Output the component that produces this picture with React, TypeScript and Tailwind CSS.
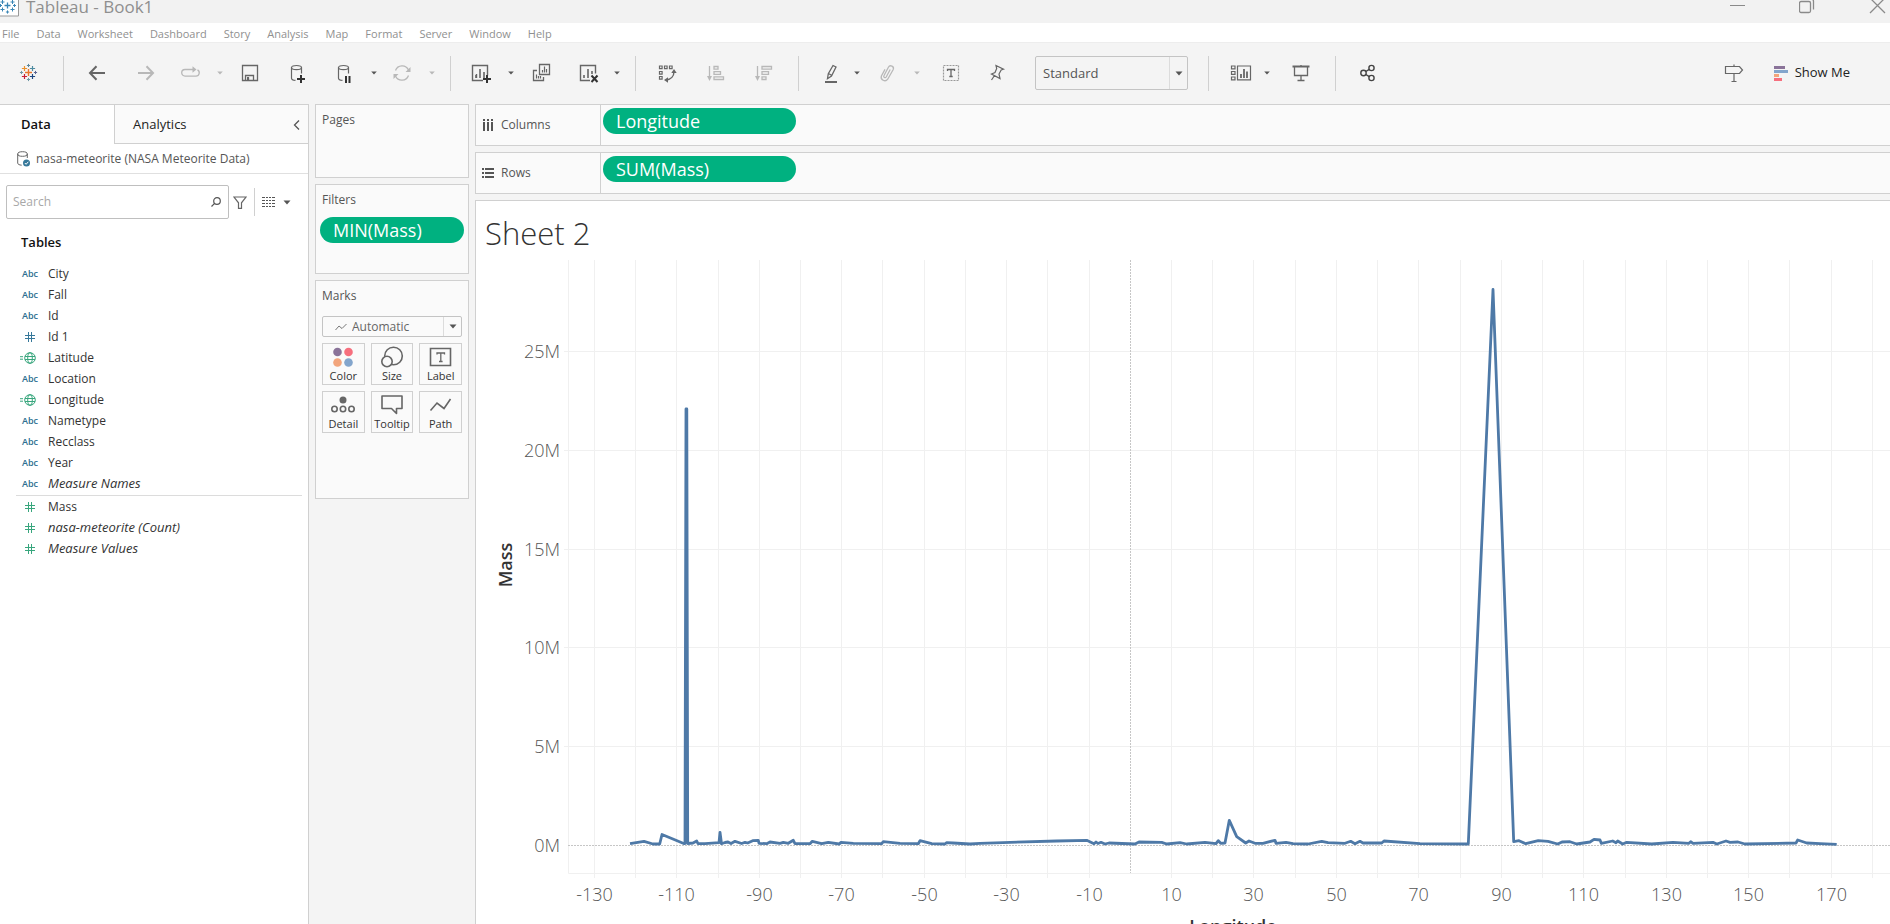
import type { ReactNode } from "react";

const UI = "font-['Open_Sans','Liberation_Sans',sans-serif]";

function Icon({ children, className = "text-[#666]" }: { children: ReactNode; className?: string }) {
  return (
    <svg viewBox="0 0 24 24" className={`block size-6 shrink-0 ${className}`} fill="none" stroke="currentColor" strokeWidth="1.2" aria-hidden="true">
      {children}
    </svg>
  );
}

function Tool({ label, className, dim, children }: { label: string; className: string; dim?: boolean; children: ReactNode }) {
  return (
    <button type="button" aria-label={label} className={`shrink-0 ${className}`}>
      <Icon className={dim ? "text-[#b8b8b8]" : "text-[#666]"}>{children}</Icon>
    </button>
  );
}

function Caret({ dim, className = "" }: { dim?: boolean; className?: string }) {
  return (
    <button type="button" aria-label="Open menu" className={`w-3 shrink-0 ${className}`}>
      <svg viewBox="0 0 12 6" className={`block h-1.5 w-3 ${dim ? "text-[#b8b8b8]" : "text-[#555]"}`} aria-hidden="true">
        <path d="M3.2 1.5h5.6L6 4.6z" fill="currentColor" />
      </svg>
    </button>
  );
}

const Sep = ({ className }: { className: string }) => <span className={`h-[35px] w-px shrink-0 bg-[#d0d0d0] ${className}`} />;

function Plus({ x, y, r, color, w = 1 }: { x: number; y: number; r: number; color: string; w?: number }) {
  return <path d={`M${x - r} ${y}h${2 * r}M${x} ${y - r}v${2 * r}`} stroke={color} strokeWidth={w} />;
}

const Cylinder = ({ x }: { x: number }) => (
  <g strokeWidth="1.2">
    <ellipse cx={x + 5.5} cy="6.6" rx="5" ry="2.1" />
    <path d={`M${x + 0.5} 6.6v10.6c0 1.4 1.6 2 4 2.2M${x + 10.5} 6.6v6`} />
  </g>
);

const TitleBar = () => (
  <header className="flex h-[23px] shrink-0 items-start justify-between bg-[#f2f2f2] text-[#8f8f8f]">
    <div className="flex items-start">
      <svg viewBox="0 0 19 17" className="block h-[17px] w-[19px]" aria-hidden="true">
        <path d="M0 0h18v16H0z" fill="#fff" />
        <path d="M0 16h18.500V0" fill="none" stroke="#999" />
        <g fill="none">
          <Plus x={7.5} y={5.5} r={3} color="#3b86b5" w={1.3} />
          <Plus x={2.5} y={2} r={2} color="#3b86b5" />
          <Plus x={12.5} y={2} r={2} color="#3b86b5" />
          <Plus x={2.5} y={9.5} r={2} color="#3b86b5" />
          <Plus x={12.5} y={9.5} r={2} color="#3b86b5" />
          <Plus x={7.5} y={12} r={1.6} color="#3b86b5" />
          <Plus x={14.5} y={5.5} r={1.5} color="#3b86b5" />
          <Plus x={0.5} y={5.5} r={1.5} color="#3b86b5" />
        </g>
      </svg>
      <h1 className="pl-[7px] text-[17px] leading-[14px]">Tableau - Book1</h1>
    </div>
    <div className="flex gap-[53px] pr-0.5">
      <button type="button" aria-label="Minimize">
        <svg viewBox="0 0 16 14" className="block h-3.5 w-4" stroke="#8a8a8a" aria-hidden="true"><path d="M0 5.500h15" /></svg>
      </button>
      <button type="button" aria-label="Restore">
        <svg viewBox="0 0 16 14" className="block h-3.5 w-4" fill="none" stroke="#8a8a8a" aria-hidden="true">
          <rect x="0.5" y="1.5" width="11" height="11" rx="1.500" strokeWidth="1.3" />
          <path d="M10-1h2c1.500 0 2.500 1 2.500 2.500v8" strokeWidth="1.3" />
        </svg>
      </button>
      <button type="button" aria-label="Close">
        <svg viewBox="0 0 20 14" className="block h-3.5 w-5" stroke="#8a8a8a" strokeWidth="1.3" aria-hidden="true"><path d="M2-2l15 15M17-2L2 13" /></svg>
      </button>
    </div>
  </header>
);

const MENUS = ["File", "Data", "Worksheet", "Dashboard", "Story", "Analysis", "Map", "Format", "Server", "Window", "Help"];

const MenuBar = () => (
  <nav className="flex h-5 shrink-0 items-center gap-[17px] border-b border-[#ededed] bg-white pt-0.5 pl-0.5 text-[11px] leading-[18px] text-[#909090]">
    {MENUS.map((m) => (
      <button type="button" key={m}>{m}</button>
    ))}
  </nav>
);

const Toolbar = () => (
  <div className="flex h-[60px] shrink-0 items-center bg-[#f4f4f4] pl-4">
    <Tool label="Start page" className="">
      <g transform="translate(0.5 0)">
        <Plus x={12} y={11.500} r={3.500} color="#e8762c" w={1.400} />
        <Plus x={8} y={7.500} r={2.600} color="#eb912c" w={1.200} />
        <Plus x={16} y={7.500} r={2.600} color="#4e8ba0" w={1.200} />
        <Plus x={8} y={15.500} r={2.600} color="#c72035" w={1.200} />
        <Plus x={16} y={15.500} r={2.600} color="#1f457e" w={1.200} />
        <Plus x={12} y={4.500} r={1.600} color="#5b879b" />
        <Plus x={12} y={18.500} r={1.600} color="#7099a6" />
        <Plus x={5} y={11.500} r={1.600} color="#7099a6" />
        <Plus x={19} y={11.500} r={1.600} color="#5b6591" />
      </g>
    </Tool>
    <Sep className="ml-[23px]" />
    <Tool label="Undo" className="ml-5.5"><path d="M19 12H4M10.500 5.300L4 12l6.500 6.700" strokeWidth="2" /></Tool>
    <Tool label="Redo" className="ml-6" dim><path d="M4 12h15M12.500 5.300L19 12l-6.500 6.700" strokeWidth="2" /></Tool>
    <Tool label="Replay" className="ml-5" dim>
      <path d="M8 8.500H7a3.300 3.300 0 0 0 0 6.600h11a3.300 3.300 0 0 0 1.500-6.200M8 8.500h8" strokeWidth="1.300" />
      <path d="M14.500 5.200L18.500 8.500l-4 3.300z" fill="currentColor" stroke="none" />
    </Tool>
    <Caret dim className="ml-3" />
    <Tool label="Save" className="ml-3">
      <path d="M4.500 4.500h15v15h-15zM7.500 19.500v-5h8v5M10.500 19v-2.500" strokeWidth="1.300" />
      <path d="M9 16h2v3H9z" fill="currentColor" stroke="none" />
    </Tool>
    <Tool label="New data source" className="ml-6">
      <Cylinder x={5} />
      <path d="M15 14v8M11 18h8" stroke="#333" strokeWidth="2" />
    </Tool>
    <Tool label="Pause updates" className="ml-5.5">
      <Cylinder x={6} />
      <path d="M14 15v7M17.500 15v7" stroke="#333" strokeWidth="2" />
    </Tool>
    <Caret className="ml-3" />
    <Tool label="Run update" className="ml-2.5" dim>
      <path d="M5.500 9.500a7 7 0 0 1 13-.5M18.500 14.500a7 7 0 0 1-13 .5" strokeWidth="1.300" />
      <path d="M20.500 6v5h-5zM3.500 18v-5h5z" fill="currentColor" stroke="none" />
    </Tool>
    <Caret dim className="ml-3" />
    <Sep className="ml-3" />
    <Tool label="New worksheet" className="ml-4.5">
      <path d="M14 19.500H3.500v-15h15v10M7.500 17v-4" strokeWidth="1.400" />
      <path d="M7 17v-3M11 17V8M15 17v-6" strokeWidth="1.600" />
      <path d="M18 14v8M14 18h8" stroke="#333" strokeWidth="2" />
    </Tool>
    <Caret className="ml-3" />
    <Tool label="Duplicate" className="ml-3">
      <path d="M10.500 3.500h10v10h-10zM8 9.500H4.500v10h10V16" strokeWidth="1.300" />
      <path d="M13.500 11.500V9M15.500 11.500v-6M17.500 11.500V8M7.500 17.500v-4M9.500 17.500V15M11.500 17.500V15" />
    </Tool>
    <Tool label="Clear sheet" className="ml-6">
      <path d="M13 19.500H3.500v-15h15v8" strokeWidth="1.400" />
      <path d="M7 17v-3M11 17V8M15 13v-3" strokeWidth="1.600" />
      <path d="M14.500 14.500l6 6.500M20.500 14.500l-6 6.500" stroke="#333" strokeWidth="2" />
    </Tool>
    <Caret className="ml-2.5" />
    <Sep className="ml-3" />
    <Tool label="Swap rows and columns" className="ml-5">
      <path d="M3.500 5h2.600v2.600H3.500zM8.500 5h2.600v2.600H8.500zM13.500 5h2.600v2.600h-2.600zM3.500 10.500h2.600v2.600H3.500zM3.500 15.500h2.600v2.600H3.500z" />
      <path d="M18 10.500c0 4.500-3 8-8 8.500" strokeWidth="1.400" />
      <path d="M18 8l2.700 4h-5.400zM8 19l4-2.700v5.400z" fill="currentColor" stroke="none" />
    </Tool>
    <Tool label="Sort ascending" className="ml-6" dim>
      <path d="M5.500 5v12M10 5.500h4v2.600h-4zM10 10.700h6.500v2.600H10zM10 15.900h9.500v2.600H10z" strokeWidth="1.300" />
      <path d="M3 15h5l-2.500 5z" fill="currentColor" stroke="none" />
    </Tool>
    <Tool label="Sort descending" className="ml-6" dim>
      <path d="M5.500 5v12M10 5.500h9.500v2.600H10zM10 10.700h6.500v2.600H10zM10 15.900h4v2.600h-4z" strokeWidth="1.300" />
      <path d="M3 15h5l-2.500 5z" fill="currentColor" stroke="none" />
    </Tool>
    <Sep className="ml-5.5" />
    <Tool label="Highlight" className="ml-5">
      <path d="M14 4.500l3 1.500-4.500 9-4 2.700.8-5zM9.500 12.500l3 1.800" strokeWidth="1.300" />
      <path d="M6 21h12" strokeWidth="2" />
    </Tool>
    <Caret className="ml-2" />
    <Tool label="Group members" className="ml-3" dim>
      <path d="M14.500 8.500l-4 7.500a1.300 1.300 0 0 1-2.300-1.300l4.500-8.400a2.600 2.600 0 0 1 4.700 2.400L12 18.200a3.600 3.600 0 0 1-6.300-3.300l3.600-6.500" strokeWidth="1.300" transform="translate(.7 0)" />
    </Tool>
    <Caret dim className="ml-3" />
    <Tool label="Show mark labels" className="ml-4">
      <path d="M4.500 4.500h15v15h-15z" stroke="#999" strokeDasharray="2 1" />
      <path d="M8.500 10V8.500h7V10M12 8.500v7M10.300 15.500h3.400" strokeWidth="1.300" />
    </Tool>
    <Tool label="Fix axes" className="ml-5.5">
      <path d="M11 4.500l7.500 3.700-2.300.8-2.200 4 1 4.500-8.500-4.500 3.500-1.500 1.700-4zM9.500 14.500L6.500 19" strokeWidth="1.200" />
    </Tool>
    <div className="ml-6.5 flex h-[34px] w-[153px] shrink-0 items-center rounded-xs border border-[#c4c4c4]">
      <div className="relative flex h-full w-full items-center">
        <select aria-label="Fit" className="h-full w-full appearance-none bg-transparent pt-0.5 pl-[7px] text-[13px] text-[#555]">
          <option>Standard</option>
          <option>Fit Width</option>
          <option>Entire View</option>
        </select>
        <span className="pointer-events-none absolute right-0 flex h-full w-[18px] items-center justify-center border-l border-[#dcdcdc]">
          <svg viewBox="0 0 8 5" className="h-[5px] w-2" aria-hidden="true"><path d="M.5.500h7L4 4.500z" fill="#555" /></svg>
        </span>
      </div>
    </div>
    <Sep className="ml-5" />
    <Tool label="Show or hide cards" className="ml-5">
      <path d="M2.500 5h3.500v2.800H2.500zM2.500 10.500h3.500v2.800H2.500zM2.500 16h3.500v2.800H2.500zM8.500 5h13v13.800h-13z" strokeWidth="1.200" />
      <path d="M12 17v-4M15 17V8M18 17v-6.500" strokeWidth="1.800" />
    </Tool>
    <Caret className="ml-2" />
    <Tool label="Presentation mode" className="ml-4">
      <path d="M3.500 5.500h17" strokeWidth="2" />
      <path d="M5.500 6v8.500h13V6M12 14.500v4.500M8.500 19.500h7M12 4v1" strokeWidth="1.300" />
    </Tool>
    <Sep className="ml-5.5" />
    <Tool label="Share" className="ml-5">
      <g strokeWidth="1.400" stroke="#444">
        <circle cx="7.500" cy="12" r="2.700" /><circle cx="15.500" cy="7" r="2.600" /><circle cx="15.500" cy="17" r="2.600" />
        <path d="M9.800 10.500l3.500-2.200M9.800 13.500l3.500 2.200" />
      </g>
    </Tool>
    <div className="ml-auto flex items-center pr-10">
      <Tool label="Guide" className="">
        <path d="M3.500 5.500h14l3 3.500-3 3.500h-14zM12 3.500v2M12 12.500v7.500M9.500 20.500h5" strokeWidth="1.200" />
      </Tool>
      <button type="button" className="ml-7 flex items-center gap-[7px] text-[13px] text-[#222]">
        <svg viewBox="0 0 14 15" className="h-[15px] w-3.5" aria-hidden="true">
          <path d="M0 0h11v3H0z" fill="#8a7399" /><path d="M0 4h14v3H0z" fill="#83a5cc" />
          <path d="M0 8h5v3H0z" fill="#f2a57c" /><path d="M0 12h8v3H0z" fill="#f66f7e" />
        </svg>
        Show Me
      </button>
    </div>
  </div>
);

type Kind = "abc" | "num" | "geo";
const DIMENSIONS: [string, Kind, boolean?][] = [
  ["City", "abc"], ["Fall", "abc"], ["Id", "abc"], ["Id 1", "num"], ["Latitude", "geo"], ["Location", "abc"],
  ["Longitude", "geo"], ["Nametype", "abc"], ["Recclass", "abc"], ["Year", "abc"], ["Measure Names", "abc", true],
];
const MEASURES: [string, Kind, boolean?][] = [["Mass", "num"], ["nasa-meteorite (Count)", "num", true], ["Measure Values", "num", true]];

function FieldIcon({ kind, green }: { kind: Kind; green: boolean }) {
  if (kind === "abc") return <span className="text-[9px] font-semibold text-[#2c6e8f]">Abc</span>;
  if (kind === "num")
    return (
      <svg viewBox="0 0 10 10" className={`h-2.5 w-2.5 ${green ? "text-[#38a67d]" : "text-[#36789a]"}`} stroke="currentColor" aria-hidden="true">
        <path d="M3.500 0v10M6.500 0v10M0 3.500h10M0 6.500h10" />
      </svg>
    );
  return (
    <svg viewBox="0 0 16 12" className="mr-1 h-3 w-4 shrink-0 text-[#38a67d]" fill="none" stroke="currentColor" aria-hidden="true">
      <circle cx="10" cy="6" r="5.300" /><ellipse cx="10" cy="6" rx="2.300" ry="5.300" />
      <path d="M5 4.500h10M5 7.500h10M0 4.700h3M0 7.200h3" />
    </svg>
  );
}

const FieldList = ({ fields, green }: { fields: [string, Kind, boolean?][]; green: boolean }) => (
  <ul>
    {fields.map(([name, kind, calc]) => (
      <li key={name} className="flex h-[21px] items-center pl-[18px]">
        <span className="flex w-6 items-center justify-center">
          <FieldIcon kind={kind} green={green} />
        </span>
        <span className={`pl-1.5 text-[#333] ${calc ? "text-[13px] italic" : "text-[12px]"}`}>{name}</span>
      </li>
    ))}
  </ul>
);

const DataPane = () => (
  <aside className="flex w-[309px] shrink-0 flex-col border-t border-r border-[#d0d0d0] bg-white">
    <div className="flex h-[39px] text-[13px]">
      <button type="button" className="w-[114px] pl-[21px] text-left font-semibold text-[#111]">Data</button>
      <button type="button" className="flex flex-1 items-center justify-between border-b border-l border-[#d0d0d0] bg-[#fafafa] pt-0.5 pr-[7px] pl-[18px] text-[#222]">
        Analytics
        <svg viewBox="0 0 8 10" className="h-2.5 w-2" fill="none" stroke="#555" strokeWidth="1.300" aria-hidden="true"><path d="M6 .5L1.500 5 6 9.500" /></svg>
      </button>
    </div>
    <div className="flex h-[30px] items-center gap-1.5 border-b border-[#e0e0e0] pl-[17px] text-[12px] text-[#555]">
      <svg viewBox="0 0 13 16" className="h-4 w-[13px]" fill="none" stroke="#666" aria-hidden="true">
        <ellipse cx="5.500" cy="3" rx="4.800" ry="2.300" /><path d="M.7 3v9c0 1.300 1.500 2 4 2.200M10.300 3v4" />
        <circle cx="9.500" cy="12" r="3.500" fill="#36789a" stroke="none" /><path d="M7.800 12l1.300 1.300 2.200-2.500" stroke="#fff" />
      </svg>
      nasa-meteorite (NASA Meteorite Data)
    </div>
    <div className="flex h-14 items-center pl-1.5">
      <label className="flex h-[34px] w-[223px] items-center rounded-xs border border-[#bfbfbf] pr-[7px] pl-1.5">
        <input type="text" placeholder="Search" aria-label="Search fields" className="w-full bg-transparent text-[12px] outline-none placeholder:text-[#a8a8a8]" />
        <svg viewBox="0 0 10 10" className="h-2.5 w-2.5 shrink-0" fill="none" stroke="#555" strokeWidth="1.200" aria-hidden="true"><circle cx="6" cy="4" r="3.300" /><path d="M3.600 6.400L.5 9.500" /></svg>
      </label>
      <button type="button" aria-label="Filter fields" className="ml-1">
        <svg viewBox="0 0 14 13" className="h-[13px] w-3.5" fill="none" stroke="#666" strokeWidth="1.200" aria-hidden="true"><path d="M1 1h12L8.500 6.800v5.500h-3V6.800z" /></svg>
      </button>
      <span className="ml-[7px] h-7 w-px bg-[#d0d0d0]" />
      <button type="button" aria-label="View as" className="ml-[7px] flex items-center gap-2">
        <svg viewBox="0 0 13 10" className="h-2.5 w-[13px]" stroke="#555" aria-hidden="true"><path d="M0 .5h3M4 .5h2M7 .5h2M10 .5h3M0 3.500h3M4 3.500h2M7 3.500h2M10 3.500h3M0 6.500h3M4 6.500h2M7 6.500h2M10 6.500h3M0 9.500h3M4 9.500h2M7 9.500h2M10 9.500h3" /></svg>
        <svg viewBox="0 0 8 5" className="h-[5px] w-2" aria-hidden="true"><path d="M.5.500h7L4 4.500z" fill="#555" /></svg>
      </button>
    </div>
    <h2 className="pt-0.5 pl-[21px] text-[13px] leading-[21px] font-semibold text-[#111]">Tables</h2>
    <div className="pt-2.5 pr-1.5">
      <FieldList fields={DIMENSIONS} green={false} />
      <hr className="mt-px ml-4 border-[#dcdcdc]" />
      <FieldList fields={MEASURES} green />
    </div>
  </aside>
);

const Pill = ({ children, className = "" }: { children: ReactNode; className?: string }) => (
  <button type="button" className={`flex h-[26px] items-center rounded-full bg-[#00b180] pl-[13px] text-[18px] font-medium text-white ${className}`}>{children}</button>
);

const MARKS: [string, ReactNode][] = [
  ["Color", <g key="c" stroke="none"><circle cx="6.500" cy="6" r="4.300" fill="#8a7399" /><circle cx="17.500" cy="6" r="4.300" fill="#f66f7e" /><circle cx="6.500" cy="16.500" r="4.300" fill="#f2a57c" /><circle cx="17.500" cy="16.500" r="4.300" fill="#83a5cc" /></g>],
  ["Size", <g key="s"><circle cx="13.500" cy="10" r="8.800" /><circle cx="7" cy="15.500" r="5.200" fill="#fafafa" /></g>],
  ["Label", <g key="l"><path d="M1.500 2.500h20v17h-20z" /><path d="M8 8.500V7h7.500v1.500M11.800 7v8.500M10 15.500h3.600" strokeWidth="1.300" /></g>],
  ["Detail", <g key="d"><circle cx="12" cy="6" r="3.500" fill="currentColor" stroke="none" /><circle cx="3.500" cy="15" r="2.700" /><circle cx="12" cy="15" r="2.700" /><circle cx="20.500" cy="15" r="2.700" /></g>],
  ["Tooltip", <path key="t" d="M2 2h20v12.500h-5.500v5l-5-5H2z" strokeLinejoin="round" />],
  ["Path", <path key="p" d="M1.500 16.500L8 9l7 5.500L21.500 5" />],
];

const card = "border border-[#d0d0d0] bg-[#fafafa]";
const cardTitle = "pl-1.5 text-[12px] leading-[30px] text-[#555]";

const CardsColumn = () => (
  <div className="flex w-[154px] shrink-0 flex-col gap-1.5">
    <section className={`h-[74px] ${card}`}>
      <h2 className={cardTitle}>Pages</h2>
    </section>
    <section className={`h-[90px] ${card}`}>
      <h2 className={cardTitle}>Filters</h2>
      <div className="px-1 pt-0.5"><Pill className="w-full">MIN(Mass)</Pill></div>
    </section>
    <section className={`h-[219px] ${card}`}>
      <h2 className={cardTitle}>Marks</h2>
      <div className="px-1.5 pt-[5px]">
        <div className="relative flex h-[21px] items-center rounded-xs border border-[#c4c4c4]">
          <svg viewBox="0 0 12 8" className="pointer-events-none absolute left-3 h-2 w-3" fill="none" stroke="#777" aria-hidden="true"><path d="M.5 7L4 3l3 2.500L11.500 1" /></svg>
          <select aria-label="Mark type" className="h-full w-full appearance-none bg-transparent pt-px pl-[29px] text-[12px] leading-[18px] text-[#666]">
            <option>Automatic</option>
            <option>Line</option>
            <option>Bar</option>
          </select>
          <span className="pointer-events-none absolute right-0 flex h-full w-[18px] items-center justify-center border-l border-[#dcdcdc]">
            <svg viewBox="0 0 8 5" className="h-[5px] w-2" aria-hidden="true"><path d="M.5.500h7L4 4.500z" fill="#555" /></svg>
          </span>
        </div>
        <div className="grid grid-cols-3 gap-1.5 pt-1.5">
          {MARKS.map(([label, icon]) => (
            <button type="button" key={label} className="flex h-[42px] flex-col items-center border border-[#d0d0d0] pt-0.5 text-[11px] leading-4 text-[#333]">
              <svg viewBox="0 0 24 22" className="h-[22px] w-6 text-[#666]" fill="none" stroke="currentColor" strokeWidth="1.600" aria-hidden="true">{icon}</svg>
              {label}
            </button>
          ))}
        </div>
      </div>
    </section>
  </div>
);

const Shelf = ({ name, pill, icon }: { name: string; pill: string; icon: ReactNode }) => (
  <section className="flex h-[42px] shrink-0 border border-r-0 border-[#d0d0d0] bg-[#fafafa]">
    <h2 className="flex w-[125px] items-center gap-[7px] border-r border-[#d0d0d0] pl-1.5 text-[12px] text-[#555]">
      <svg viewBox="0 0 12 12" className="h-3 w-3" fill="#555" aria-hidden="true">{icon}</svg>
      {name}
    </h2>
    <div className="pt-[3px] pl-0.5"><Pill className="w-[193px]">{pill}</Pill></div>
  </section>
);

const SERIES =
  "630,843.7 644,841.3 653,844 659.7,844 662,834.500 673.500,839.300 683.700,843.500 685,843.500 686,409 686.800,409 687.700,843.500 693,843 696.700,841 698,843.700 705,843.700 719,842.700 720,832.300 721.500,843.700 725,842.500 728,842 731,843.500 735,841.300 741.700,843.500 745,842.300 747.700,843 752.700,840.700 758.300,840.300 759,843.300 766.700,843.700 770,842 780,843.300 783.300,842.300 788.300,843.300 793.300,840.300 795,843.700 810,843.700 812.300,841.300 821.700,843.700 828.300,842.300 839.300,844 841,842.300 853.300,843.300 881.700,843.700 883.300,841.700 900,843.300 918.300,843.700 920,840.700 931.700,843.700 945,844 946.700,842.700 953,843 970,844 980,843.300 1056.700,841 1086.700,840.300 1094,843.700 1096,842 1098,843.500 1101,842.300 1105,844 1109,843 1135,844 1139,842 1161.700,842.300 1166.700,844 1180,842.700 1186.700,844 1205,842.300 1216,843.700 1218.300,840.700 1220.700,843.300 1225,843 1229.300,820.300 1236.700,836.700 1245.700,843 1249,841 1255,843.300 1263,843.300 1275,840.300 1276,843.300 1286,842.300 1293,843.700 1308,844 1321.700,841.300 1328,842.700 1345,843.300 1350.700,841.300 1355,843.700 1360,841.300 1363,843 1381.700,843 1384,841 1420,843.700 1468.300,844 1493,289.500 1513.700,841.700 1519,840.700 1525.700,843.700 1538.300,840.700 1548,841.300 1557.700,844 1562,842 1570,841.700 1576.700,844 1590,842 1594,839.300 1600,840 1601.300,843.300 1612.700,841 1616,842.700 1617.700,841 1622.700,844 1626.700,842.300 1651.700,844 1673,842.300 1689,843.300 1690.700,841.700 1693,843.300 1713,842.300 1716.700,844 1726,841 1730,842.300 1738,842 1745,844 1796,843 1797.700,840 1806.700,843 1820,843.700 1836.700,844.300";

const LONGITUDES = Array.from({ length: 32 }, (_, i) => -130 + i * 10);
const xOf = (lon: number) => Math.round(1129.8 + lon * 4.123) + 0.5;
const yOf = (m: number) => Math.round(845 - m * 19.76) + 0.5;

const Chart = () => (
  <svg viewBox="476 252 1414 690" className="block w-full shrink-0" role="img" aria-label="Sum of mass by longitude">
    <g stroke="#f0f0f0">
      {LONGITUDES.filter((l) => l !== 0).map((l) => <path key={l} d={`M${xOf(l)} 260V878`} />)}
      {[5, 10, 15, 20, 25].map((m) => <path key={m} d={`M564 ${yOf(m)}H1890`} />)}
      <path d="M568.500 260V873.500H1890" fill="none" />
    </g>
    <path d={`M${xOf(0)} 260V873M568 845.500H1890`} stroke="#c6c6c6" strokeDasharray="2 1" />
    <polyline points={SERIES} fill="none" stroke="#4e79a7" strokeWidth="2.800" strokeLinejoin="round" />
    <g className="text-[18px] font-light" fill="#555">
      {[0, 5, 10, 15, 20, 25].map((m) => <text key={m} x="560" y={yOf(m) + 6.500} textAnchor="end">{m}M</text>)}
      {LONGITUDES.filter((l) => l % 20 !== 0 && l <= 170).map((l) => <text key={l} x={xOf(l)} y="901" textAnchor="middle">{l}</text>)}
    </g>
    <g className="text-[18px] font-semibold" fill="#333" textAnchor="middle">
      <text transform="translate(512 565) rotate(-90)">Mass</text>
      <text x="1233" y="933">Longitude</text>
    </g>
  </svg>
);

export default function App() {
  return (
    <div className={`flex h-screen flex-col overflow-hidden bg-[#f4f4f4] ${UI}`}>
      <TitleBar />
      <MenuBar />
      <Toolbar />
      <div className="flex min-h-0 flex-1 gap-1.5 pt-px">
        <DataPane />
        <CardsColumn />
        <main className="flex min-w-0 flex-1 flex-col gap-1.5">
          <Shelf name="Columns" pill="Longitude" icon={<path d="M1 0h2v2H1zM5 0h2v2H5zM9 0h2v2H9zM1 3h2v9H1zM5 3h2v9H5zM9 3h2v9H9z" />} />
          <Shelf name="Rows" pill="SUM(Mass)" icon={<path d="M0 1h2v2H0zM0 5h2v2H0zM0 9h2v2H0zM3 1h9v2H3zM3 5h9v2H3zM3 9h9v2H3z" />} />
          <section className="flex min-h-0 flex-1 flex-col overflow-hidden border-t border-l border-[#d0d0d0] bg-white">
            <h2 className="h-[51px] shrink-0 pt-3 pl-[9px] text-[31px] leading-10 font-light text-[#333]">Sheet 2</h2>
            <Chart />
          </section>
        </main>
      </div>
    </div>
  );
}
